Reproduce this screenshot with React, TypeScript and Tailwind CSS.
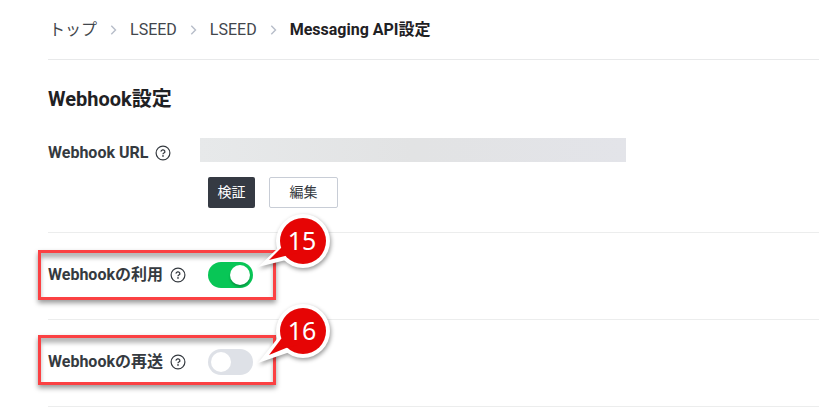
import { useState } from "react";
import type { ReactNode } from "react";

const CRUMBS = ["トップ", "LSEED", "LSEED"];

function Chevron() {
  return (
    <svg className="mx-[13px] h-2.5 w-[7px]" viewBox="0 0 7 10" fill="none" aria-hidden="true">
      <path d="M1.3 0.8 5.5 5 1.3 9.2" stroke="#b7bdc9" strokeWidth="1.4" />
    </svg>
  );
}

function HelpButton({ label }: { label: string }) {
  return (
    <button type="button" aria-label={`${label} help`} className="block h-4 w-4 text-[#353a40]">
      <svg viewBox="0 0 16 16" fill="none" stroke="currentColor">
        <circle cx="8" cy="8" r="6.9" strokeWidth="1.2" />
        <path d="M6.1 6.7a1.9 1.7 0 1 1 2.8 1.3C8.300 8.400 8 8.600 8 9.200" strokeWidth="1.300" />
        <circle cx="8" cy="10.900" r="0.850" fill="currentColor" stroke="none" />
      </svg>
    </button>
  );
}

interface CalloutProps {
  value: number;
  /** white outline of the pointer */
  outline: string;
  tip: string;
  className: string;
}

function Callout({ value, outline, tip, className }: CalloutProps) {
  return (
    <div className={`pointer-events-none absolute left-[209px] h-[60px] w-[74px] ${className}`}>
      <svg
        className="absolute inset-0 overflow-visible drop-shadow-[1px_2px_2px_rgba(0,0,0,0.4)]"
        viewBox="0 0 74 60"
        aria-hidden="true"
      >
        <circle cx="46" cy="28" r="27" fill="#fff" />
        <path d={outline} fill="#fff" />
        <circle cx="46" cy="28" r="23" fill="#e60505" />
        <path d={tip} fill="#e60505" />
      </svg>
      <span className="relative ml-[18px] flex h-[54px] w-[54px] items-center justify-center font-['Noto_Sans',sans-serif] text-[25px] leading-none text-white">
        {value}
      </span>
    </div>
  );
}

interface ToggleRowProps {
  id: string;
  label: string;
  initial: boolean;
  frameClass: string;
  children: ReactNode;
}

function ToggleRow({ id, label, initial, frameClass, children }: ToggleRowProps) {
  const [on, setOn] = useState(initial);

  return (
    <div className="relative flex h-[87px] items-start border-b border-[#eceded] pt-[29px]">
      <div className="flex w-40 items-center gap-[7px] pt-px">
        <label htmlFor={id} className="font-bold text-[#353a40]">
          {label}
        </label>
        <HelpButton label={label} />
      </div>
      <label className="relative block h-[26px] w-[45px] cursor-pointer">
        <input
          id={id}
          type="checkbox"
          role="switch"
          checked={on}
          onChange={(e) => setOn(e.target.checked)}
          className="peer block h-full w-full appearance-none rounded-full bg-[#dee1e7] checked:bg-[#08c656]"
        />
        <span className="absolute top-[3px] left-[3px] h-5 w-5 rounded-full bg-white peer-checked:left-[22px] peer-checked:shadow-[0_2px_2px_rgba(0,0,0,0.25)]" />
      </label>
      <div
        className={`pointer-events-none absolute -left-2.5 h-[50px] w-[238px] border-3 border-[#fb4143] shadow-[0_3px_5px_rgba(0,0,0,0.4),inset_0_5px_4px_rgba(0,0,0,0.28)] ${frameClass}`}
      />
      {children}
    </div>
  );
}

export default function App() {
  return (
    <div className="overflow-hidden bg-white pl-12 font-['Roboto','Noto_Sans_CJK_JP',sans-serif] text-base leading-6 text-[#1f2124]">
      <nav
        aria-label="Breadcrumb"
        className="flex h-[60px] items-center border-b border-[#e8e9ea] pl-px"
      >
        {CRUMBS.map((crumb, i) => (
          <span key={i} className="flex items-center">
            <a href="#" className="text-[#42464c]">
              {crumb}
            </a>
            <Chevron />
          </span>
        ))}
        <span aria-current="page" className="font-bold">
          Messaging API設定
        </span>
      </nav>

      <main>
        <h1 className="pt-6 text-xl leading-[30px] font-bold">Webhook設定</h1>

        <div className="flex items-start border-b border-[#eceded] pt-6 pb-6">
          <div className="flex w-[152px] items-center gap-[7px] pt-[3px]">
            <span className="font-bold text-[#353a40]">Webhook URL</span>
            <HelpButton label="Webhook URL" />
          </div>
          <div className="flex-1">
            <div className="h-6 max-w-[426px] bg-linear-to-r from-[#e7e9ea] via-[#e2e3e4] to-[#e3e4e9]" />
            <div className="mt-[15px] ml-2 flex gap-3.5 text-sm">
              <button
                type="button"
                className="h-[31px] w-[47px] rounded-xs bg-[#353a43] pb-0.5 text-white"
              >
                検証
              </button>
              <button
                type="button"
                className="h-[31px] w-[69px] rounded-xs border border-[#c8cdd6] pb-0.5 text-[#353a40]"
              >
                編集
              </button>
            </div>
          </div>
        </div>

        <ToggleRow id="use-webhook" label="Webhookの利用" initial frameClass="top-[17px]">
          <Callout
            value={15}
            outline="M1 54 20 36 36 20 46 40 29 47Z"
            tip="M12 47 24 35 40 24 40 40 28 43Z"
            className="-top-5"
          />
        </ToggleRow>
        <ToggleRow
          id="webhook-redelivery"
          label="Webhookの再送"
          initial={false}
          frameClass="top-[15px]"
        >
          <Callout
            value={16}
            outline="M1 60 20 36 36 20 46 42 30 50Z"
            tip="M12 52 24 36 40 24 40 42 29 45Z"
            className="-top-[17px]"
          />
        </ToggleRow>
      </main>
    </div>
  );
}
